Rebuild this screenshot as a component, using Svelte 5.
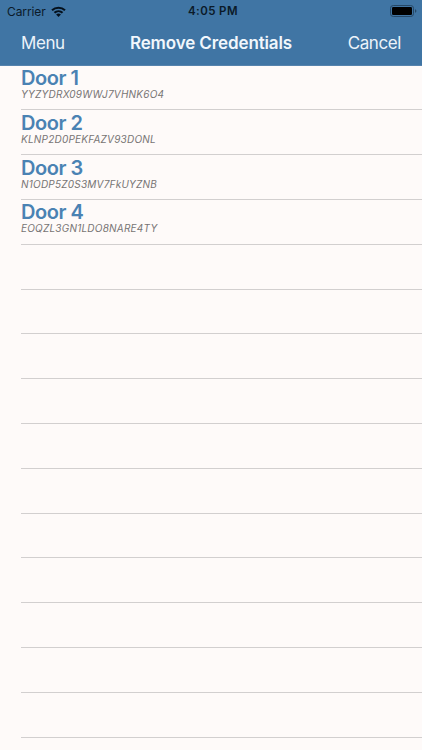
<script lang="ts">
	type Credential = { name: string; code: string };

	let credentials = $state<Credential[]>([
		{ name: 'Door 1', code: 'YYZYDRX09WWJ7VHNK6O4' },
		{ name: 'Door 2', code: 'KLNP2D0PEKFAZV93DONL' },
		{ name: 'Door 3', code: 'N1ODP5Z0S3MV7FkUYZNB' },
		{ name: 'Door 4', code: 'EOQZL3GN1LDO8NARE4TY' }
	]);

	// the table keeps its separators going below the last entry
	const visibleRows = 15;
	let emptyRows = $derived(Math.max(0, visibleRows - credentials.length));
</script>

<div class="screen">
	<header>
		<div class="status-bar">
			<div class="carrier">
				<span>Carrier</span>
				<svg class="wifi" viewBox="0 0 15 11" aria-hidden="true">
					<path d="M.3 3.6a10.3 10.3 0 0 1 14.4 0l-1.4 1.5a8.3 8.3 0 0 0-11.6 0z" />
					<path d="M2.7 6.1a6.9 6.9 0 0 1 9.6 0l-1.5 1.5a4.8 4.8 0 0 0-6.6 0z" />
					<path d="M5.1 8.6a3.5 3.5 0 0 1 4.8 0L7.5 11z" />
				</svg>
			</div>
			<span class="time">4:05 PM</span>
			<svg class="battery" viewBox="0 0 27 12" aria-hidden="true">
				<rect class="shell" x="0.5" y="0.5" width="23" height="11" rx="2.8" />
				<rect x="2" y="2" width="20" height="8" rx="1.2" />
				<path class="tip" d="M25 4.2c1 .3 1.4 1 1.4 1.8s-.4 1.5-1.4 1.8z" />
			</svg>
		</div>
		<nav>
			<button class="menu">Menu</button>
			<h1>Remove Credentials</h1>
			<button class="cancel">Cancel</button>
		</nav>
	</header>

	<ul>
		{#each credentials as credential (credential.code)}
			<li>
				<div class="name">{credential.name}</div>
				<div class="code">{credential.code}</div>
			</li>
		{/each}
		{#each { length: emptyRows } as _}
			<li></li>
		{/each}
	</ul>
</div>

<style>
	:global(body) {
		background: #fefaf9;
	}
	.screen {
		height: 750px;
		overflow: hidden;
		font-family: Inter, 'Liberation Sans', sans-serif;
		background: #fefaf9;
	}
	header {
		height: 65.7px;
		box-sizing: border-box;
		background: #4075a4;
		border-bottom: 1px solid #5683ad;
	}
	.status-bar {
		display: grid;
		grid-template-columns: 1fr auto 1fr;
		align-items: center;
		height: 22px;
		padding: 0 5px 0 7px;
		font-size: 12px;
		color: #0b1a29;
	}
	.carrier {
		display: flex;
		align-items: center;
		gap: 5px;
		letter-spacing: -0.1px;
	}
	.wifi {
		width: 15px;
		height: 11px;
		fill: #04101b;
	}
	.time {
		padding-left: 2px;
		font-size: 11.5px;
		font-weight: 600;
		letter-spacing: 0.4px;
	}
	.battery {
		justify-self: end;
		width: 27px;
		height: 12px;
		fill: #000;
	}
	.battery .shell {
		fill: none;
		stroke: #264866;
	}
	.battery .tip {
		fill: #264866;
	}
	nav {
		display: grid;
		grid-template-columns: 1fr auto 1fr;
		align-items: center;
		height: 42px;
		padding: 0 21px;
	}
	button {
		padding: 0;
		border: none;
		background: none;
		font: inherit;
		font-size: 17px;
		letter-spacing: -0.4px;
		color: #ecf3fa;
		cursor: pointer;
	}
	.menu {
		justify-self: start;
	}
	.cancel {
		justify-self: end;
	}
	h1 {
		margin: 0;
		font-size: 17px;
		font-weight: 600;
		letter-spacing: -0.12px;
		color: #f1f7fc;
	}
	ul {
		margin: 0;
		padding: 0 0 0 21px;
		list-style: none;
	}
	li {
		height: 44.8px;
		box-sizing: border-box;
		border-bottom: 1px solid #d2cfcf;
	}
	.name {
		padding-top: 1.3px;
		font-size: 20px;
		font-weight: 600;
		line-height: 22px;
		letter-spacing: -0.45px;
		color: #4a82b3;
	}
	.code {
		font-size: 10px;
		font-style: italic;
		line-height: 11px;
		letter-spacing: 0.22px;
		color: #777474;
	}
</style>
